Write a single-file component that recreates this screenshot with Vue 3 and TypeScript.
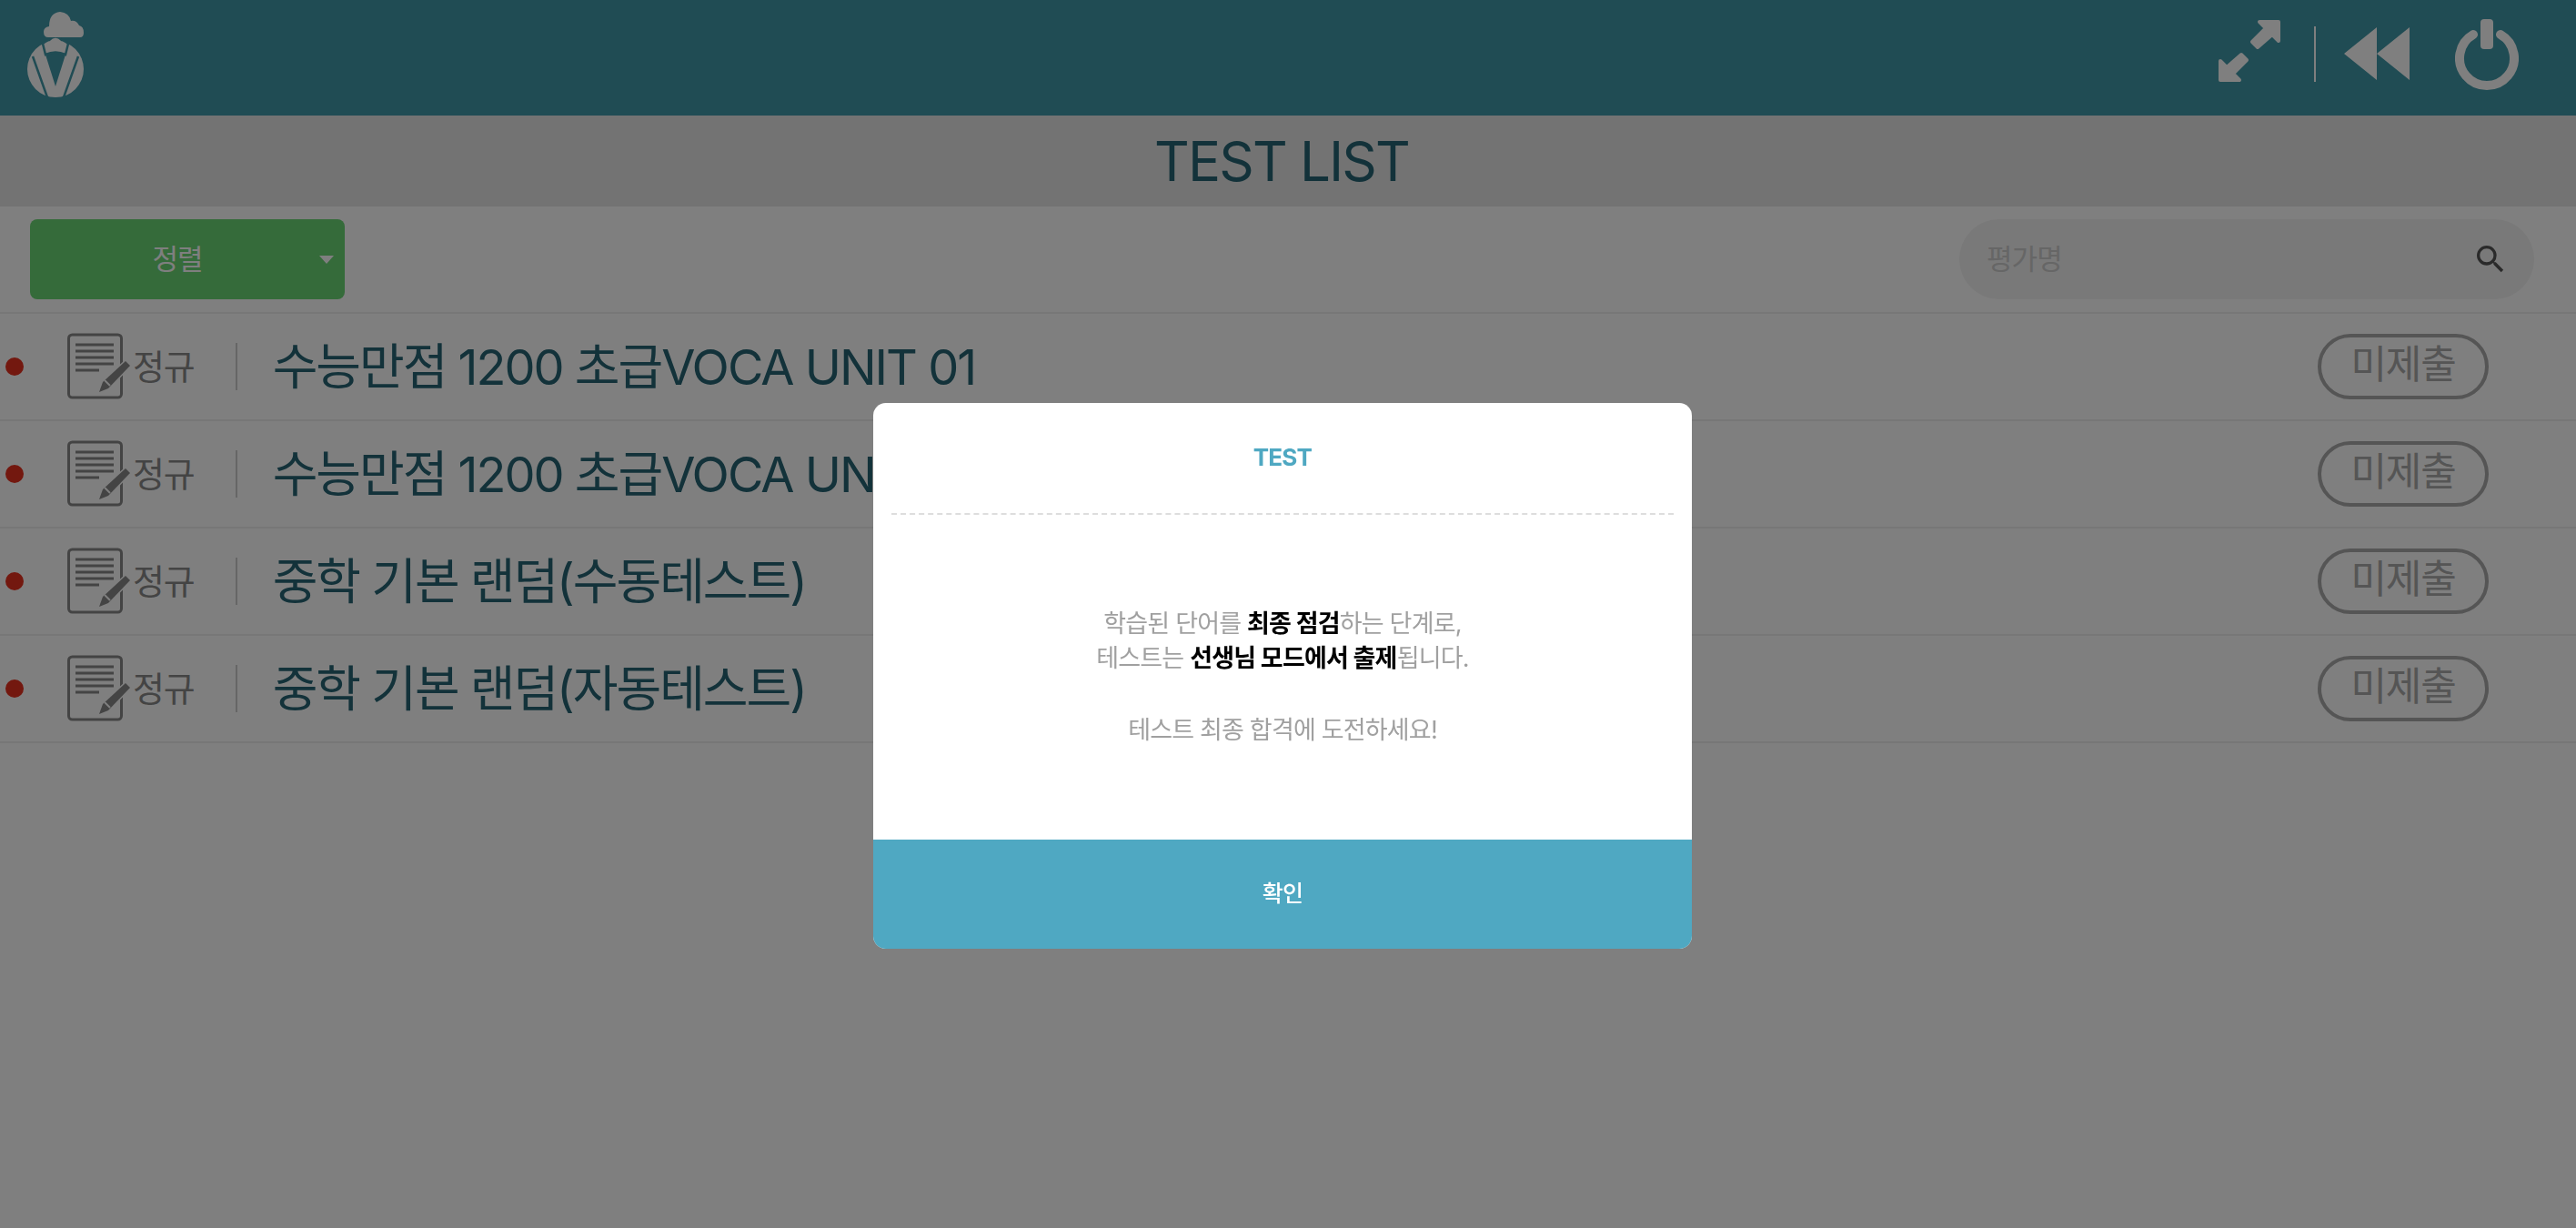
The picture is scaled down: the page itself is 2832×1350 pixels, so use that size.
<template>
  <div class="page">
    <header class="top">
      <svg class="logo" width="62" height="94" viewBox="0 0 62 94">
        <circle cx="31" cy="63" r="31" fill="#fff" />
        <path d="M20 47 Q31 42 42 47 L31 82 Z" fill="#4098a8" />
        <path d="M6 49 L22 94 M56 49 L40 94" stroke="#4098a8" stroke-width="2.5" fill="none" />
        <path d="M17 35 Q22 31 24 31 Q31 24 38 31 Q40 31 45 35 L42 47 Q31 42 20 47 Z" fill="#fff" stroke="#4098a8" stroke-width="2.5" />
        <path d="M23 28 Q18 28 18 22 Q18 17 24 16 Q24 1 36 0 Q46 1 48 10 Q54 9 57 15 Q62 16 62 23 Q62 28 58 28 Z" fill="#fff" />
      </svg>
      <div class="tools">
        <svg width="70" height="70" viewBox="0 0 70 70">
          <g fill="#fff" stroke="#fff" stroke-width="4" stroke-linejoin="round">
            <polygon points="46,3 67,3 67,24 60,17 44,31 38,25 53,10" />
            <polygon points="24,67 3,67 3,46 10,53 26,39 32,45 17,60" />
          </g>
        </svg>
        <span class="tool-sep"></span>
        <svg class="rewind" width="72" height="58" viewBox="0 0 72 58">
          <path d="M0 29 L36 0 V58 Z M36 29 L72 0 V58 Z" fill="#fff" />
        </svg>
        <svg class="power" width="70" height="78" viewBox="0 0 70 78">
          <path d="M20 17 A30 30 0 1 0 50 17" fill="none" stroke="#fff" stroke-width="10" stroke-linecap="round" />
          <rect x="28" y="0" width="14" height="33" rx="4" fill="#fff" />
        </svg>
      </div>
    </header>

    <h1 class="heading">TEST LIST</h1>

    <div class="toolbar">
      <div class="sort">
        <span class="sort-label">정렬</span>
        <span class="caret"></span>
      </div>
      <div class="search">
        <span class="search-text">평가명</span>
        <svg width="40" height="40" viewBox="0 0 24 24">
          <path fill="#555" d="M15.5 14h-.79l-.28-.27A6.47 6.47 0 0 0 16 9.5 6.5 6.5 0 1 0 9.5 16c1.61 0 3.09-.59 4.23-1.57l.27.28v.79l5 4.99L20.49 19l-4.99-5zm-6 0C7.01 14 5 11.99 5 9.5S7.01 5 9.5 5 14 7.01 14 9.5 11.99 14 9.5 14z" />
        </svg>
      </div>
    </div>

    <ul class="list">
      <li v-for="t in tests" :key="t.id" class="row">
        <span class="dot"></span>
        <svg class="doc" width="72" height="74" viewBox="0 0 72 74">
          <rect x="1.5" y="2" width="58" height="69" rx="4" fill="none" stroke="#888" stroke-width="3" />
          <path d="M9 13 H51 M9 20 H51 M9 27 H51 M9 34 H51 M9 41 H35" stroke="#888" stroke-width="3" fill="none" />
          <path d="M35 65 L39 54 L64 31 L69 36 L45 61 Z" fill="#888" stroke="#fff" stroke-width="3" paint-order="stroke" />
          <path d="M41 52 L47 58" stroke="#fff" stroke-width="2" />
        </svg>
        <span class="kind">정규</span>
        <span class="row-sep"></span>
        <span class="name">{{ t.name }}</span>
        <span class="status">미제출</span>
      </li>
    </ul>

    <div class="overlay">
      <div class="modal">
        <div class="modal-title">TEST</div>
        <div class="modal-body">
          <p>학습된 단어를 <b>최종 점검</b>하는 단계로,</p>
          <p>테스트는 <b>선생님 모드에서 출제</b>됩니다.</p>
          <p class="gap">테스트 최종 합격에 도전하세요!</p>
        </div>
        <button class="ok">확인</button>
      </div>
    </div>
  </div>
</template>

<script setup lang="ts">
const tests = [
  { id: 1, name: '수능만점 1200 초급VOCA UNIT 01' },
  { id: 2, name: '수능만점 1200 초급VOCA UNIT 02' },
  { id: 3, name: '중학 기본 랜덤(수동테스트)' },
  { id: 4, name: '중학 기본 랜덤(자동테스트)' },
]
</script>

<style>
html,
body {
  background: #fff;
}
</style>

<style scoped>
.page {
  width: 2832px;
  height: 1350px;
  overflow: hidden;
  font-family: Inter, "Noto Sans CJK KR", sans-serif;
}

.page * {
  letter-spacing: -0.03em;
}

.top {
  height: 127px;
  background: #4098a8;
  display: flex;
  align-items: flex-start;
  justify-content: space-between;
  padding: 13px 63px 0 30px;
  box-sizing: border-box;
}

.tools {
  display: flex;
  align-items: flex-start;
  padding-top: 8px;
}

.tool-sep {
  width: 2px;
  height: 61px;
  margin: 8px 31px 0 36px;
  background: #fff;
}

.rewind {
  margin-top: 9px;
}

.power {
  margin: 0 0 0 50px;
}

.heading {
  margin: 0;
  height: 100px;
  padding-right: 14px;
  line-height: 100px;
  background: #e6e6e6;
  text-align: center;
  font-size: 60px;
  font-weight: 400;
  color: #266574;
}

.toolbar {
  height: 118px;
  padding: 14px 46px 0 33px;
  box-sizing: border-box;
  display: flex;
  justify-content: space-between;
  align-items: flex-start;
  border-bottom: 2px solid #eee;
}

.sort {
  position: relative;
  width: 346px;
  height: 88px;
  border-radius: 8px;
  background: #6ad674;
  display: flex;
  align-items: center;
  justify-content: center;
  padding: 0 2px 5px 0;
  box-sizing: border-box;
}

.sort-label {
  margin-right: 20px;
  font-size: 31px;
  color: #fff;
}

.caret {
  position: absolute;
  right: 12px;
  top: 40px;
  border-left: 8px solid transparent;
  border-right: 8px solid transparent;
  border-top: 9px solid #fff;
}

.search {
  width: 632px;
  height: 88px;
  border-radius: 44px;
  background: #f2f2f2;
  display: flex;
  align-items: center;
  justify-content: space-between;
  padding: 0 28px 0 30px;
  box-sizing: border-box;
}

.search-text {
  padding-bottom: 5px;
  font-size: 31px;
  color: #ccc;
}

.list {
  margin: 0;
  padding: 0;
  list-style: none;
}

.row {
  height: 118px;
  display: flex;
  align-items: center;
  padding-left: 6px;
  box-sizing: border-box;
  border-bottom: 2px solid #eee;
}

.dot {
  width: 20px;
  height: 20px;
  border-radius: 50%;
  background: #e6301e;
}

.doc {
  margin-left: 48px;
}

.kind {
  padding-bottom: 5px;
  font-size: 38px;
  color: #888;
}

.row-sep {
  width: 2px;
  height: 52px;
  margin: 0 39px 0 45px;
  background: #ccc;
}

.page .name {
  flex: 1;
  padding-bottom: 7px;
  font-size: 54px;
  letter-spacing: -0.037em;
  color: #266574;
}

.status {
  width: 188px;
  height: 72px;
  margin-right: 96px;
  box-sizing: border-box;
  border: 4px solid #aaa;
  border-radius: 36px;
  text-align: center;
  line-height: 59px;
  font-size: 43px;
  color: #aaa;
}

.overlay {
  position: fixed;
  inset: 0;
  background: rgba(0, 0, 0, 0.5);
  display: flex;
  justify-content: center;
  align-items: flex-start;
  padding: 443px 12px 0 0;
  box-sizing: border-box;
}

.modal {
  width: 900px;
  height: 600px;
  background: #fff;
  border-radius: 14px;
  overflow: hidden;
  display: flex;
  flex-direction: column;
}

.modal-title {
  height: 121px;
  margin: 0 20px;
  line-height: 119px;
  text-align: center;
  font-size: 26px;
  font-weight: 700;
  color: #4fa8c2;
  border-bottom: 2px dashed #ddd;
}

.modal-body {
  flex: 1;
  padding-top: 101px;
  text-align: center;
  font-size: 27px;
  line-height: 38px;
  color: #a0a0a0;
}

.modal-body p {
  margin: 0;
}

.modal-body b {
  font-weight: 700;
  color: #000;
}

.modal-body .gap {
  margin-top: 41px;
}

.ok {
  height: 120px;
  padding-bottom: 8px;
  border: none;
  background: #4fa8c2;
  color: #fff;
  font-family: inherit;
  font-size: 25px;
  font-weight: 500;
}
</style>
